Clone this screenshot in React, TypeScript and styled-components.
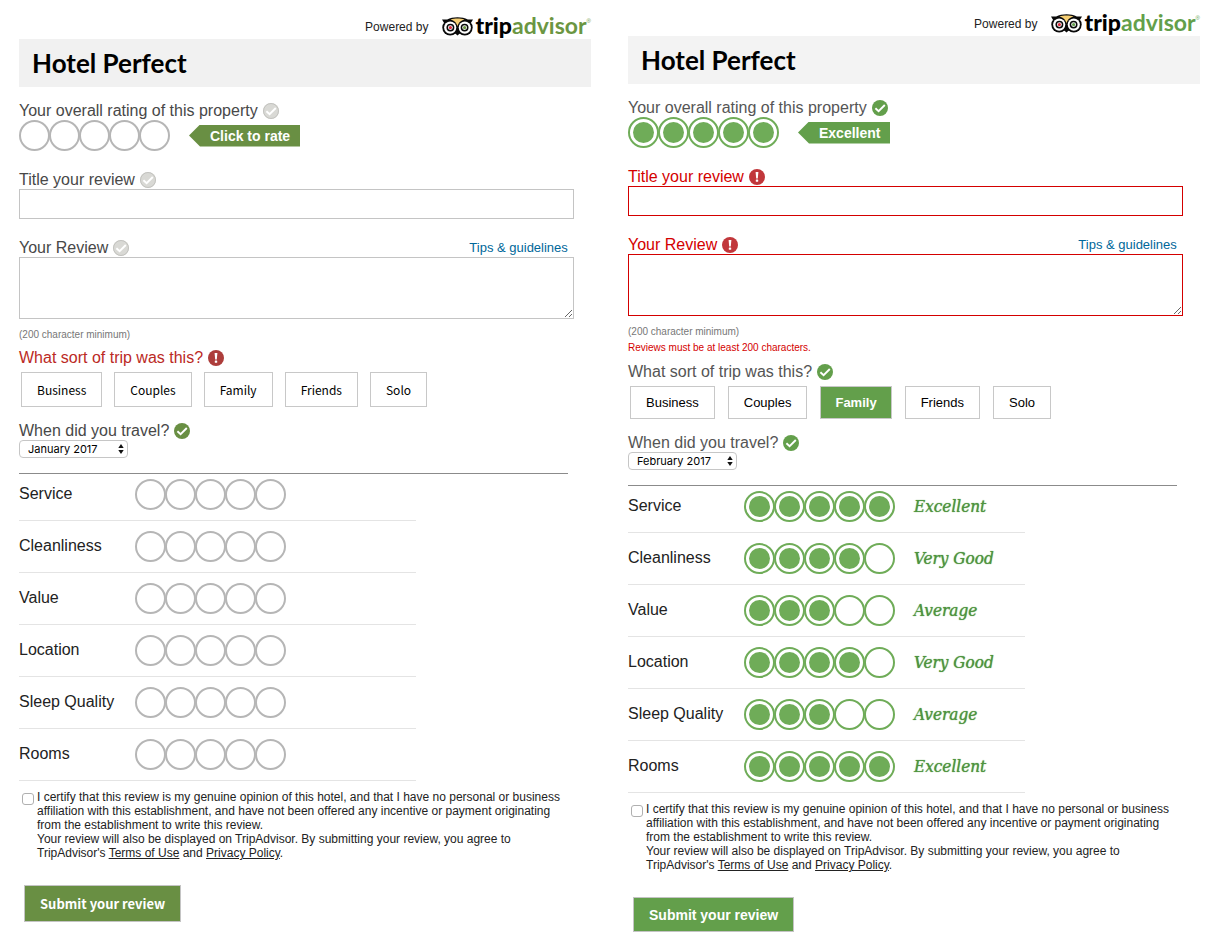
import React, { useId, useState } from "react";
import styled, { createGlobalStyle, css } from "styled-components";

const GlobalStyle = createGlobalStyle`
  *, *::before, *::after { box-sizing: border-box; }
  body {
    margin: 0;
    background: #fff;
    color: #222;
    font-family: "Liberation Sans", Arial, sans-serif;
    font-size: 16px;
  }
`;

type Face = "humanist" | "plain";
type Status = "idle" | "ok" | "error";

interface Skin {
  face: Face;
  green: string;
  logoGreen: string;
  bar: string;
  error: string;
  label: string;
}

const leftSkin: Skin = {
  face: "humanist",
  green: "#698f43",
  logoGreen: "#6b9642",
  bar: "#f1f1f1",
  error: "#bb2a25",
  label: "#484848",
};

const rightSkin: Skin = {
  face: "plain",
  green: "#639f4b",
  logoGreen: "#639f4b",
  bar: "#f3f3f3",
  error: "#d40000",
  label: "#555",
};

const faces = {
  humanist: '"Noto Sans CJK SC", "Noto Sans", sans-serif',
  plain: '"Liberation Sans", Arial, sans-serif',
};

const Page = styled.main`
  display: grid;
  grid-template-columns: 1fr 1fr;
  column-gap: 37px;
  padding: 0 18px 0 19px;
`;

const Form = styled.form<{ $top: number }>`
  display: flex;
  flex-direction: column;
  min-width: 0;
  padding-top: ${(p) => p.$top}px;
`;

const Powered = styled.div`
  display: flex;
  justify-content: flex-end;
  align-items: flex-end;
  gap: 14px;
  height: 36px;
  font-size: 12px;
  line-height: 24px;
`;

const Logo = styled.div`
  display: flex;
  align-items: flex-end;
  gap: 2px;
  padding-bottom: 2px;
`;

const WordMark = styled.span`
  display: flex;
  font: 900 23px/24px Lato, sans-serif;
  color: #000;
`;

const WordTail = styled.span<{ $color: string }>`
  font-weight: 700;
  color: ${(p) => p.$color};
`;

const Registered = styled.span<{ $color: string }>`
  font: 6px/16px "Liberation Sans", Arial, sans-serif;
  color: ${(p) => p.$color};
`;

const HotelName = styled.h1<{ $bg: string }>`
  margin: 0 0 15px;
  padding: 0 13px;
  background: ${(p) => p.$bg};
  color: #000;
  font: 700 26px/48px Lato, sans-serif;
`;

const Heading = styled.div<{ $color: string }>`
  display: flex;
  align-items: center;
  gap: 5px;
  height: 18px;
  color: ${(p) => p.$color};
  line-height: 18px;
`;

const ReviewHeader = styled.div`
  display: flex;
  justify-content: space-between;
  align-items: center;
  padding-right: 6px;
`;

const TipsLink = styled.a`
  color: #00679a;
  font-size: 13px;
  line-height: 16px;
  text-decoration: none;
`;

const Field = styled.div`
  width: 97%;
  margin-bottom: 20px;
`;

const ReviewField = styled(Field)`
  margin-bottom: 8px;
`;

const boxStyle = css<{ $border: string }>`
  display: block;
  width: 100%;
  margin: 0;
  padding: 4px 6px;
  border: 1px solid ${(p) => p.$border};
  border-radius: 0;
  outline: none;
  background: #fff;
  font: 14px/18px "Liberation Sans", Arial, sans-serif;
`;

const TitleInput = styled.input<{ $border: string }>`
  ${boxStyle}
  height: 30px;
`;

const ReviewArea = styled.textarea<{ $border: string }>`
  ${boxStyle}
  height: 62px;
`;

const Notes = styled.div`
  margin-bottom: 6px;
`;

const Note = styled.p`
  margin: 0;
  color: #777;
  font-size: 10px;
  line-height: 16px;
`;

const ErrorNote = styled(Note)<{ $color: string }>`
  padding-bottom: 1px;
  color: ${(p) => p.$color};
`;

const Overall = styled.div`
  display: flex;
  align-items: center;
  gap: 20px;
  margin-bottom: 20px;
`;

const RatingTag = styled.output<{ $bg: string }>`
  padding: 0 10px 0 21px;
  background: ${(p) => p.$bg};
  clip-path: polygon(0 50%, 11px 0, 100% 0, 100% 100%, 11px 100%);
  color: #fff;
  font-size: 14px;
  font-weight: 700;
  line-height: 22px;
`;

const Dots = styled.div`
  display: flex;
`;

const Dot = styled.input<{ $rated: boolean; $filled: boolean }>`
  appearance: none;
  flex: none;
  width: 31px;
  height: 31px;
  margin: 0 -1px 0 0;
  padding: 3px;
  border: 2px solid ${(p) => (p.$rated ? "#6fac58" : "#b6b6b6")};
  border-radius: 50%;
  background: ${(p) => (p.$filled ? "#6fac58" : "#fff")} content-box;
  cursor: pointer;
`;

const Choices = styled.div<{ $face: Face }>`
  display: flex;
  gap: ${(p) => (p.$face === "humanist" ? 12 : 13)}px;
  margin: 5px 0 15px 2px;
`;

const Choice = styled.button<{ $face: Face; $active: boolean; $green: string }>`
  height: ${(p) => (p.$face === "humanist" ? 35 : 33)}px;
  padding: 0 ${(p) => (p.$active ? 14 : 15)}px;
  border: 1px solid #c8c8c8;
  background: ${(p) => (p.$active ? p.$green : "#fff")};
  color: ${(p) => (p.$active ? "#fff" : "#000")};
  font-family: ${(p) => faces[p.$face]};
  font-size: ${(p) => (p.$face === "humanist" ? 12 : 13)}px;
  font-weight: ${(p) => (p.$active ? 700 : 400)};
  cursor: pointer;
`;

const SelectBox = styled.div`
  display: grid;
  align-items: center;
  justify-items: end;
  width: 109px;

  > * { grid-area: 1 / 1; }
`;

const MonthSelect = styled.select`
  appearance: none;
  width: 100%;
  height: 18px;
  padding: 0 8px;
  border: 1px solid #c6c6c6;
  border-radius: 4px;
  background: #fff;
  color: #000;
  font: 11px/16px Inter, sans-serif;
`;

const Arrows = styled.svg`
  margin-right: 4px;
  pointer-events: none;
`;

const Details = styled.section`
  width: 96%;
  margin-top: 15px;
  padding-top: 5px;
  border-top: 1px solid #8b8b8b;
`;

const DetailRow = styled.div`
  display: flex;
  align-items: center;
  max-width: 397px;
  padding: 10px 0;
  border-bottom: 1px solid #e4e4e4;

  &:first-child { padding-top: 0; }
`;

const DetailName = styled.span`
  flex: 0 0 116px;
  padding-bottom: 2px;
  line-height: 18px;
`;

const Verdict = styled.span`
  margin-left: 20px;
  padding-bottom: 2px;
  color: #4f9440;
  font: italic 400 17px/24px "DejaVu Serif Condensed", "DejaVu Serif", Georgia, serif;
  text-shadow: 0 0 1px #4f9440;
  white-space: nowrap;
`;

const Certify = styled.div`
  display: flex;
  align-items: flex-start;
  width: 96%;
  margin: 9px 0 25px;
  font-size: 12px;
  line-height: 14px;
`;

const CertifyBox = styled.input`
  appearance: none;
  flex: none;
  width: 12px;
  height: 12px;
  margin: 3px 3px 0;
  border: 1px solid #b0b0b0;
  border-radius: 3px;
  background: #fff;

  &:checked { background: #639f4b; }
`;

const CertifyText = styled.div`
  p { margin: 0; }
  a { color: inherit; text-decoration: underline; }
`;

const Submit = styled.button<{ $face: Face; $bg: string }>`
  align-self: flex-start;
  height: ${(p) => (p.$face === "humanist" ? 37 : 35)}px;
  margin-left: 5px;
  padding: 0 15px;
  border: 1px solid #c4c4c4;
  background: ${(p) => p.$bg};
  color: #fff;
  font-family: ${(p) => faces[p.$face]};
  font-size: ${(p) => (p.$face === "humanist" ? 13 : 14)}px;
  font-weight: 700;
  cursor: pointer;
`;

function Owl({ green }: { green: string }) {
  return (
    <svg width="31" height="20" viewBox="0 0 31 20" aria-hidden="true">
      <path d="M0 2.600h5.200C8 1 11.600.2 15.500.2S23 1 25.800 2.600H31l-2.400 4L15.500 18.600 2.400 6.600z" fill="#0a0a0a" />
      <circle cx="8.200" cy="10.600" r="7.900" fill="#0a0a0a" />
      <circle cx="22.800" cy="10.600" r="7.900" fill="#0a0a0a" />
      <path d="M8.500 2.500C12.500 1.200 18.500 1.200 22.500 2.500 18.800 3.400 16 6.200 15.500 9.500 15 6.200 12.200 3.400 8.500 2.500z" fill="#f6cf73" />
      <circle cx="8.200" cy="10.600" r="6.100" fill="#fff" />
      <circle cx="22.800" cy="10.600" r="6.100" fill="#fff" />
      <circle cx="8.400" cy="10.600" r="3.200" fill="#fff" stroke="#0a0a0a" strokeWidth="1.500" />
      <circle cx="22.600" cy="10.600" r="3.200" fill="#fff" stroke="#0a0a0a" strokeWidth="1.500" />
      <circle cx="8.400" cy="10.600" r="1.600" fill="#dd2b3e" />
      <circle cx="22.600" cy="10.600" r="1.600" fill={green} />
    </svg>
  );
}

function StatusMark({ status, skin }: { status: Status; skin: Skin }) {
  const fill =
    status === "idle" ? "#d9d9d5" : status === "ok" ? skin.green : skin.face === "plain" ? "#c1373b" : "#ad3d3b";
  return (
    <svg width="16" height="16" viewBox="0 0 16 16" aria-hidden="true">
      <circle cx="8" cy="8" r="8" fill={fill} />
      {status === "idle" && <circle cx="8" cy="8" r="7.500" fill="none" stroke="#c3c3bf" />}
      {status === "error" ? (
        <g fill="#fff">
          <path d="M6.600 3h2.800L8.800 9.400H7.200z" />
          <rect x="6.800" y="10.600" width="2.400" height="2.200" rx=".5" />
        </g>
      ) : (
        <path d="M3.400 8.200l3.200 3L12.800 5" fill="none" stroke="#fff" strokeWidth="1.900" />
      )}
    </svg>
  );
}

const words = ["", "Terrible", "Poor", "Average", "Very Good", "Excellent"];

function Rating({ name, value, onChange }: { name: string; value: number; onChange: (n: number) => void }) {
  const group = useId();
  return (
    <Dots role="radiogroup" aria-label={name}>
      {[1, 2, 3, 4, 5].map((n) => (
        <Dot
          key={n}
          type="radio"
          name={group}
          aria-label={words[n]}
          checked={n === value}
          onChange={() => onChange(n)}
          $rated={value > 0}
          $filled={n <= value}
        />
      ))}
    </Dots>
  );
}

interface Question {
  overall: Status;
  title: Status;
  trip: Status;
}

interface ReviewFormProps {
  skin: Skin;
  top: number;
  status: Question;
  overall: number;
  trip: string;
  month: string;
  scores: number[];
  tooShort?: boolean;
}

const aspects = ["Service", "Cleanliness", "Value", "Location", "Sleep Quality", "Rooms"];
const trips = ["Business", "Couples", "Family", "Friends", "Solo"];

function ReviewForm(props: ReviewFormProps) {
  const { skin, status } = props;
  const id = useId();
  const [overall, setOverall] = useState(props.overall);
  const [trip, setTrip] = useState(props.trip);
  const [scores, setScores] = useState(props.scores);

  const tone = (s: Status) => (s === "error" ? skin.error : skin.label);
  const border = status.title === "error" ? skin.error : "#c4c4c4";

  return (
    <Form $top={props.top} onSubmit={(e) => e.preventDefault()}>
      <Powered>
        <span>Powered by</span>
        <Logo>
          <Owl green={skin.logoGreen} />
          <WordMark>
            trip<WordTail $color={skin.logoGreen}>advisor</WordTail>
            <Registered $color={skin.logoGreen}>®</Registered>
          </WordMark>
        </Logo>
      </Powered>
      <HotelName $bg={skin.bar}>Hotel Perfect</HotelName>

      <Heading $color={tone(status.overall)}>
        <span>Your overall rating of this property</span>
        <StatusMark status={status.overall} skin={skin} />
      </Heading>
      <Overall>
        <Rating name="Overall rating" value={overall} onChange={setOverall} />
        <RatingTag $bg={skin.green}>{overall ? words[overall] : "Click to rate"}</RatingTag>
      </Overall>

      <Field>
        <Heading $color={tone(status.title)}>
          <label htmlFor={id + "title"}>Title your review</label>
          <StatusMark status={status.title} skin={skin} />
        </Heading>
        <TitleInput id={id + "title"} type="text" $border={border} />
      </Field>

      <ReviewField>
        <ReviewHeader>
          <Heading $color={tone(status.title)}>
            <label htmlFor={id + "review"}>Your Review</label>
            <StatusMark status={status.title} skin={skin} />
          </Heading>
          <TipsLink href="#tips">Tips &amp; guidelines</TipsLink>
        </ReviewHeader>
        <ReviewArea id={id + "review"} $border={border} />
      </ReviewField>
      <Notes>
        <Note>(200 character minimum)</Note>
        {props.tooShort && <ErrorNote $color={skin.error}>Reviews must be at least 200 characters.</ErrorNote>}
      </Notes>

      <Heading $color={tone(status.trip)}>
        <span>What sort of trip was this?</span>
        <StatusMark status={status.trip} skin={skin} />
      </Heading>
      <Choices $face={skin.face}>
        {trips.map((t) => (
          <Choice
            key={t}
            type="button"
            aria-pressed={t === trip}
            onClick={() => setTrip(t)}
            $face={skin.face}
            $green={skin.green}
            $active={t === trip}
          >
            {t}
          </Choice>
        ))}
      </Choices>

      <Heading $color={skin.label}>
        <label htmlFor={id + "month"}>When did you travel?</label>
        <StatusMark status="ok" skin={skin} />
      </Heading>
      <SelectBox>
        <MonthSelect id={id + "month"} defaultValue={props.month}>
          <option>January 2017</option>
          <option>February 2017</option>
        </MonthSelect>
        <Arrows width="6" height="10" viewBox="0 0 6 10" aria-hidden="true">
          <path d="M3 0l2.700 4H.3zM3 10L.3 6h5.400z" fill="#111" />
        </Arrows>
      </SelectBox>

      <Details>
        {aspects.map((a, i) => (
          <DetailRow key={a}>
            <DetailName>{a}</DetailName>
            <Rating
              name={a}
              value={scores[i]}
              onChange={(n) => setScores(scores.map((s, j) => (j === i ? n : s)))}
            />
            {scores[i] > 0 && <Verdict>{words[scores[i]]}</Verdict>}
          </DetailRow>
        ))}
      </Details>

      <Certify>
        <CertifyBox type="checkbox" id={id + "certify"} />
        <CertifyText>
          <p>
            <label htmlFor={id + "certify"}>
              I certify that this review is my genuine opinion of this hotel, and that I have no personal or business
              affiliation with this establishment, and have not been offered any incentive or payment originating from
              the establishment to write this review.
            </label>
          </p>
          <p>
            Your review will also be displayed on TripAdvisor. By submitting your review, you agree to TripAdvisor's{" "}
            <a href="#terms">Terms of Use</a> and <a href="#privacy">Privacy Policy</a>.
          </p>
        </CertifyText>
      </Certify>
      <Submit type="submit" $face={skin.face} $bg={skin.green}>
        Submit your review
      </Submit>
    </Form>
  );
}

export default function App() {
  return (
    <>
      <GlobalStyle />
      <Page>
        <ReviewForm
          skin={leftSkin}
          top={3}
          status={{ overall: "idle", title: "idle", trip: "error" }}
          overall={0}
          trip=""
          month="January 2017"
          scores={[0, 0, 0, 0, 0, 0]}
        />
        <ReviewForm
          skin={rightSkin}
          top={0}
          status={{ overall: "ok", title: "error", trip: "ok" }}
          overall={5}
          trip="Family"
          month="February 2017"
          scores={[5, 4, 3, 4, 3, 5]}
          tooShort
        />
      </Page>
    </>
  );
}
